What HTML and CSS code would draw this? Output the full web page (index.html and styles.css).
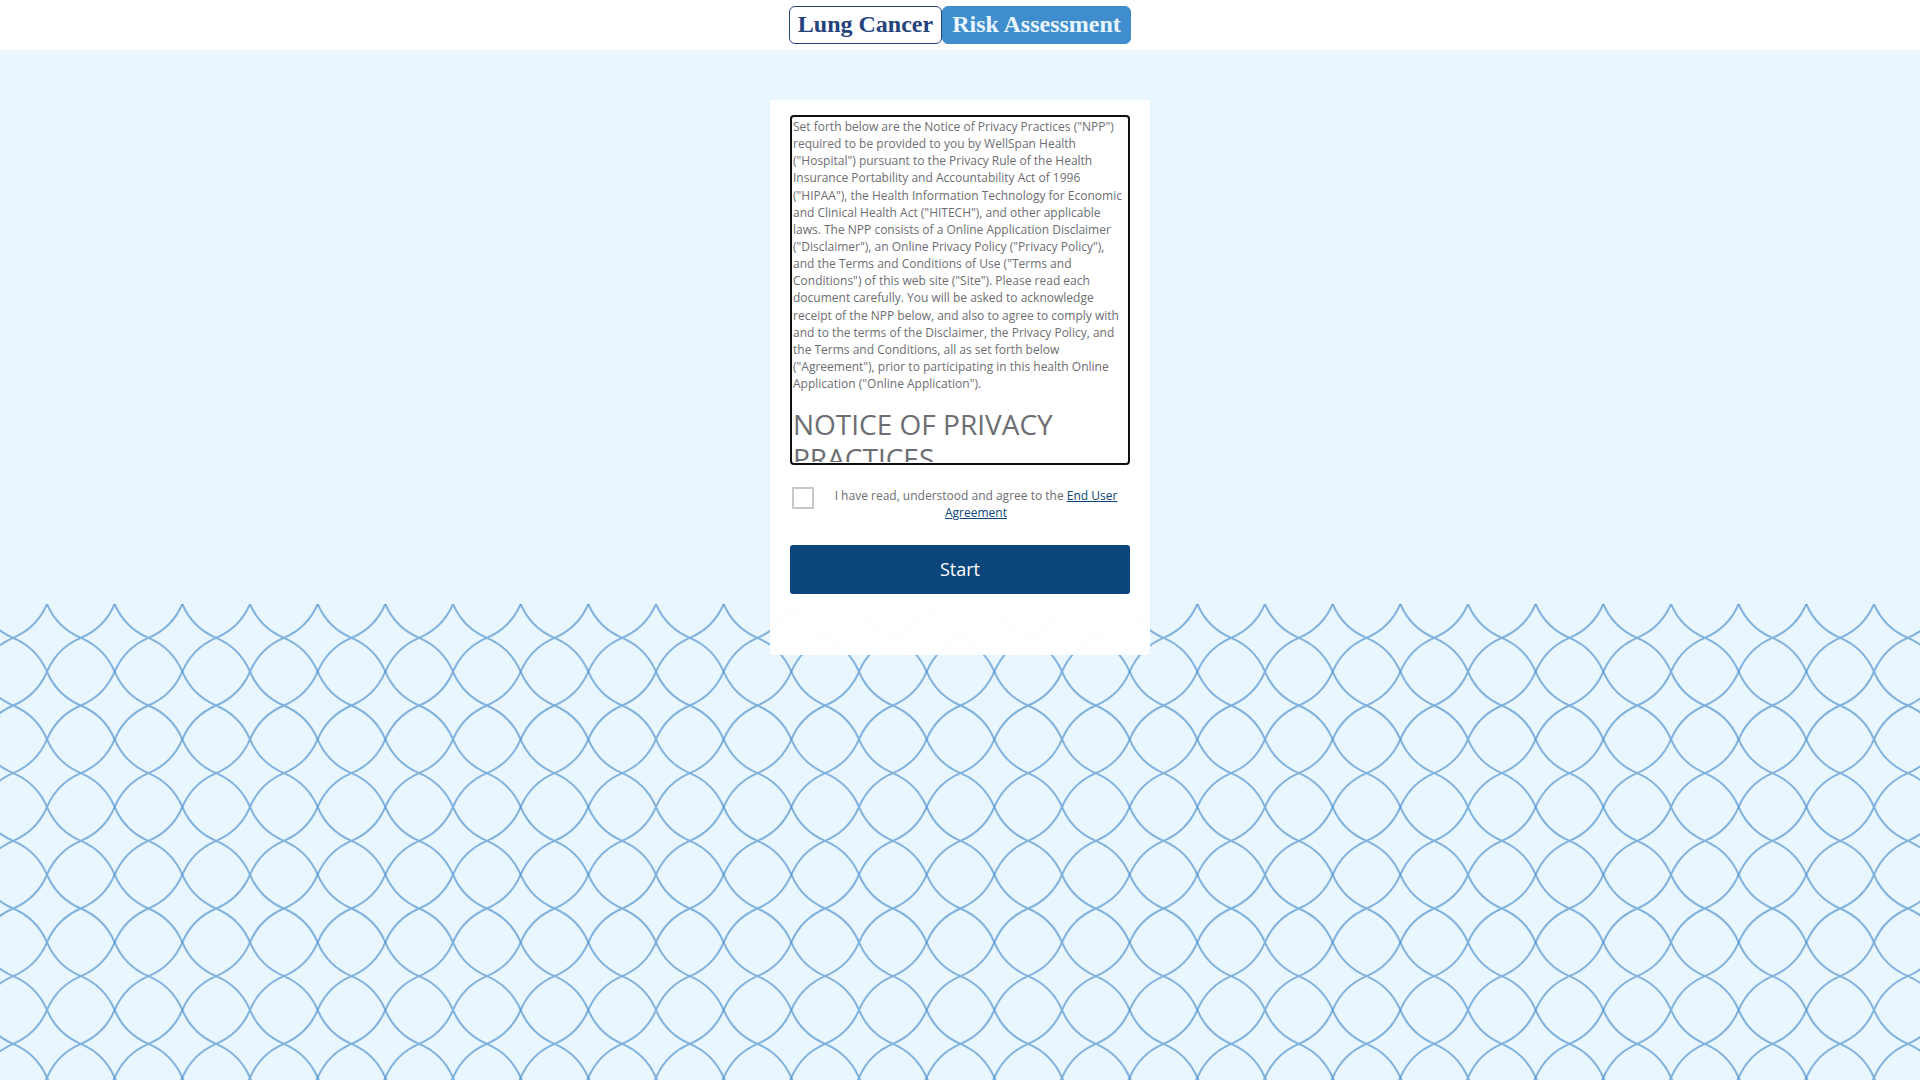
FILE: index.html
```html
<!DOCTYPE html>
<html lang="en">
<head>
    <meta charset="UTF-8">
    <meta name="viewport" content="width=device-width, initial-scale=1.0">
    <title>Lung Cancer Risk Assessment</title>
    <link rel="stylesheet" href="styles.css">
</head>
<body>
    <header class="header">
        <h1 class="logo">
            <span class="logo-name">Lung Cancer</span>
            <span class="logo-type">Risk Assessment</span>
        </h1>
    </header>

    <div class="waves"></div>

    <main class="main">
        <form class="card">
            <div class="agreement" id="agreement" tabindex="0">
                <p>Set forth below are the Notice of Privacy Practices ("NPP") required to be provided to you by WellSpan Health ("Hospital") pursuant to the Privacy Rule of the Health Insurance Portability and Accountability Act of 1996 ("HIPAA"), the Health Information Technology for Economic and Clinical Health Act ("HITECH"), and other applicable laws. The NPP consists of a Online Application Disclaimer ("Disclaimer"), an Online Privacy Policy ("Privacy Policy"), and the Terms and Conditions of Use ("Terms and Conditions") of this web site ("Site"). Please read each document carefully. You will be asked to acknowledge receipt of the NPP below, and also to agree to comply with and to the terms of the Disclaimer, the Privacy Policy, and the Terms and Conditions, all as set forth below ("Agreement"), prior to participating in this health Online Application ("Online Application").</p>
                <h2>NOTICE OF PRIVACY PRACTICES</h2>
            </div>

            <div class="agree">
                <input type="checkbox" id="agree" name="agree">
                <label for="agree">I have read, understood and agree to the <a href="#agreement">End User Agreement</a></label>
            </div>

            <button class="start" type="submit">Start</button>
        </form>
    </main>
</body>
</html>
```

FILE: styles.css
```css
* {
    box-sizing: border-box;
}
body {
    margin: 0;
    min-height: 100vh;
    position: relative;
    background-color: #e9f6fe;
    color: #6d6e71;
    font-family: "Open Sans", Arial, sans-serif;
    font-size: 12px;
    line-height: 1.428571;
}

/* Header */
.header {
    display: flex;
    justify-content: center;
    height: 50px;
    padding: 6px 0;
    background-color: #fff;
}
.logo {
    display: flex;
    margin: 0;
    font-family: "Liberation Serif", "Times New Roman", serif;
    font-size: 24px;
    font-weight: bold;
    line-height: 34px;
    white-space: nowrap;
}
.logo-name,
.logo-type {
    display: flex;
    justify-content: center;
    border: 1px solid #24427c;
    border-radius: 6px;
    color: #24427c;
}
.logo-name {
    width: 153px;
}
.logo-type {
    width: 189px;
    border-color: #408dcd;
    background-color: #408dcd;
    color: #e9f6fe;
}

/* Wave pattern along the bottom of the page */
.waves {
    position: absolute;
    right: 0;
    bottom: 0;
    left: 0;
    height: 476px;
    background: url("data:image/svg+xml,%3Csvg xmlns='http://www.w3.org/2000/svg' viewBox='0 0 6 6'%3E%3Cg fill='none' stroke='%233c86c8' stroke-opacity='.6' stroke-width='.06'%3E%3Cdefs%3E%3Cpath id='c' d='M0 0a1.9 1.9 0 0 0 1 1a1.9 1.9 0 0 1 1 1M2 0a1.9 1.9 0 0 1-1 1a1.9 1.9 0 0 0-1 1'/%3E%3Cg id='r'%3E%3Cuse href='%23c'/%3E%3Cuse href='%23c' x='2'/%3E%3Cuse href='%23c' x='4'/%3E%3C/g%3E%3C/defs%3E%3Cuse href='%23r'/%3E%3Cuse href='%23r' y='2'/%3E%3Cuse href='%23r' y='4'/%3E%3C/g%3E%3C/svg%3E") center top / 203px 203px;
}

/* Card */
.main {
    position: relative;
    padding: 50px 20px;
}
.card {
    max-width: 380px;
    margin: 0 auto;
    padding: 15px 20px 61px;
    border-radius: 4px;
    background-color: rgba(255, 255, 255, 0.97);
}
.agreement {
    height: 344px;
    margin: 3px;
    outline: 2px solid #101010;
    outline-offset: 1px;
    border-radius: 1px;
    overflow: hidden;
}
.agreement p {
    margin: 0 0 10px;
}
.agreement h2 {
    margin: 15px 0 10px;
    font-size: 28px;
    font-weight: normal;
    line-height: 34px;
}
.agree {
    display: flex;
    align-items: flex-start;
    gap: 20px;
    padding: 22px 2px 24px;
}
.agree input {
    appearance: none;
    flex: none;
    width: 22px;
    height: 22px;
    margin: 0;
    border: 2px solid #c8c8c8;
    background-color: #fff;
}
.agree input:checked {
    background-color: #0c457a;
}
.agree label {
    flex: 1;
    padding-right: 10px;
    text-align: center;
}
.agree a {
    color: #0c457a;
}
.start {
    display: block;
    width: 100%;
    height: 49px;
    padding: 0 0 2px;
    border: 0;
    border-radius: 3px;
    background-color: #0c457a;
    color: #fff;
    font-family: inherit;
    font-size: 18px;
    cursor: pointer;
}
```
